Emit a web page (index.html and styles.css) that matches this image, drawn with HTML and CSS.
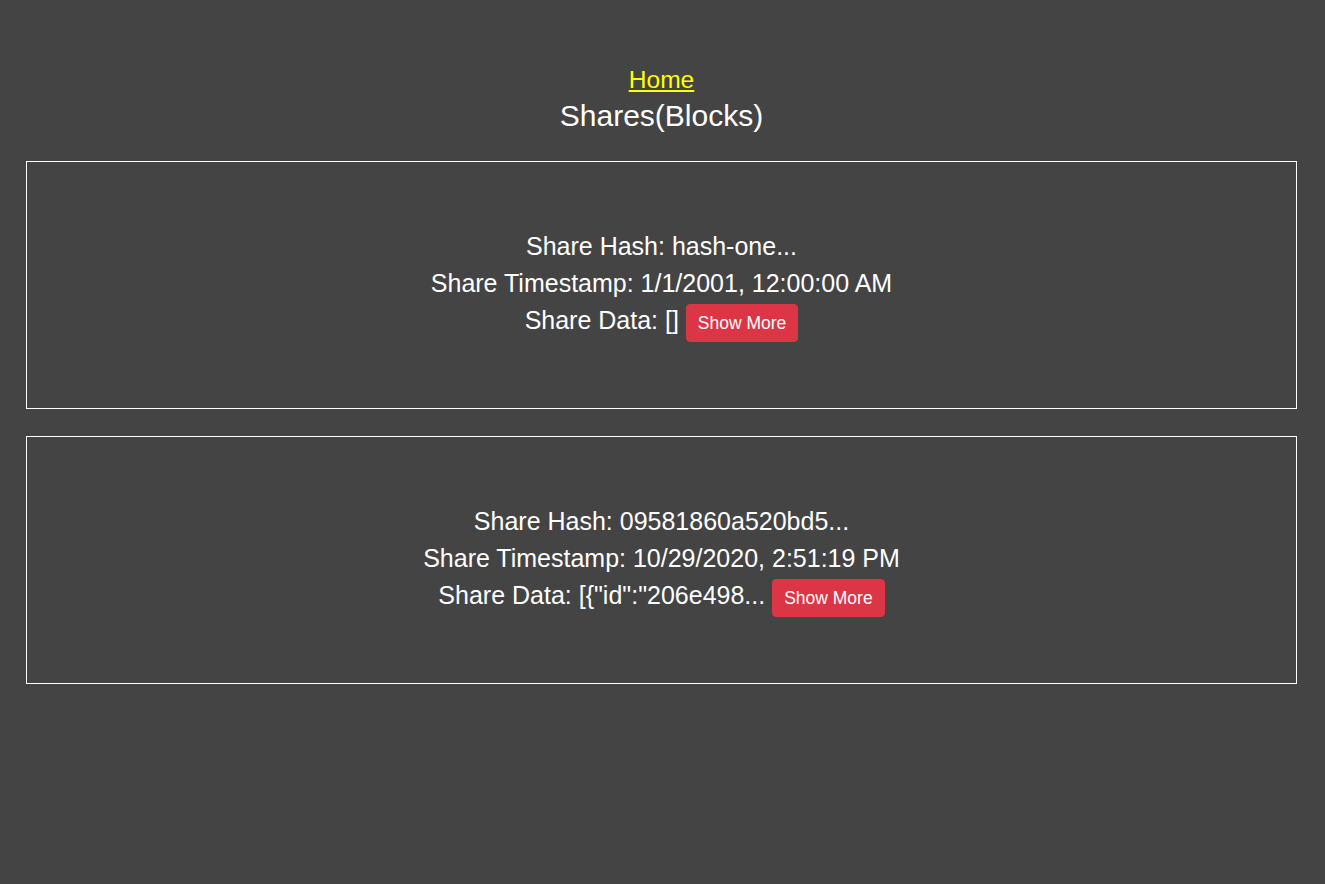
FILE: index.html
```html
<!DOCTYPE html>
<html lang="en">
<head>
<meta charset="utf-8">
<title>Shares(Blocks)</title>
<link rel="stylesheet" href="styles.css">
</head>
<body>
<div class="page">
  <header class="header">
    <a class="home-link" href="#">Home</a>
    <h3 class="title">Shares(Blocks)</h3>
  </header>
  <div class="share">
    <div class="line">Share Hash: hash-one...</div>
    <div class="line">Share Timestamp: 1/1/2001, 12:00:00 AM</div>
    <div class="line">Share Data: [] <button class="btn-more">Show More</button></div>
  </div>
  <div class="share">
    <div class="line">Share Hash: 09581860a520bd5...</div>
    <div class="line">Share Timestamp: 10/29/2020, 2:51:19 PM</div>
    <div class="line">Share Data: [{"id":"206e498... <button class="btn-more">Show More</button></div>
  </div>
</div>
</body>
</html>
```
FILE: styles.css
```css
html, body {
  margin: 0;
  padding: 0;
  background: #444444;
}
body {
  font-family: "Liberation Sans", Arial, sans-serif;
  color: #ffffff;
  min-height: 884px;
}
.page {
  padding: 62px 28px 0 26px;
  display: flex;
  flex-direction: column;
  gap: 27px;
}
.header {
  display: flex;
  flex-direction: column;
  align-items: center;
  text-align: center;
}
.home-link {
  color: #ffff00;
  font-size: 24.6px;
  line-height: 36px;
  text-decoration: underline;
}
.title {
  margin: 0;
  font-weight: normal;
  font-size: 30px;
  line-height: 36px;
}
.share {
  border: 1px solid #ffffff;
  padding: 66px 0;
  text-align: center;
  font-size: 25px;
}
.line {
  line-height: 37px;
}
.btn-more {
  display: inline-block;
  vertical-align: baseline;
  font-family: "Liberation Sans", Arial, sans-serif;
  font-size: 17.5px;
  line-height: 24px;
  padding: 6px 11px;
  color: #ffffff;
  background: #dc3545;
  border: 1px solid #dc3545;
  border-radius: 4px;
  cursor: pointer;
}
```
